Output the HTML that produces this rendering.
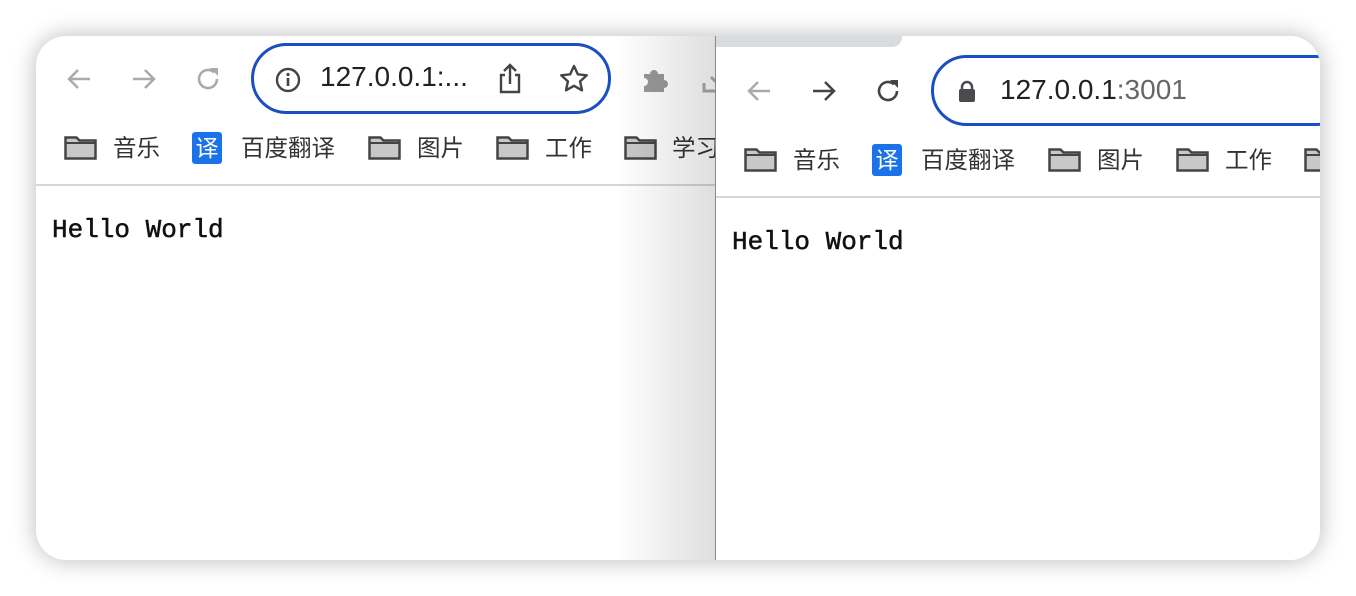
<!DOCTYPE html>
<html><head><meta charset="utf-8"><style>
*{margin:0;padding:0;box-sizing:border-box}
body{width:1356px;height:596px;background:#fff;position:relative;overflow:hidden;font-family:"Liberation Sans","Noto Sans CJK SC",sans-serif}
.frame{position:absolute;left:36px;top:36px;width:1284px;height:524px;border-radius:30px;overflow:hidden;background:#fff;box-shadow:0 0 24px rgba(0,0,0,0.28)}
.a{position:absolute}
.pill{position:absolute;border:3px solid #1a4fc4;border-radius:36px;background:#fff}
.t{position:absolute;font-size:23.5px;color:#333;white-space:nowrap;line-height:30px}
.fd{position:absolute;width:33px;height:24px}
.yi{position:absolute;width:30px;height:32px;background:#1a73e8;color:#fff;border-radius:3px;font-size:23px;line-height:32px;text-align:center}
.hw{position:absolute;font-family:"Liberation Mono",monospace;font-size:26px;color:#111;-webkit-text-stroke:0.5px #111}
.div{position:absolute;height:2px;background:#d6d6d6}
.url{position:absolute;font-size:28px;color:#202124}
</style></head><body>
<svg width="0" height="0" style="position:absolute"><defs><g id="f"><path d="M1.5 1.5h11l3 3h16v18h-30z" fill="#c8c8c8" stroke="#444" stroke-width="2.5"/><path d="M1.5 7h30" stroke="#444" stroke-width="2"/></g></defs></svg>
<div class="frame">
  <!-- left window -->
  <svg class="a" style="left:28px;top:28px" width="30" height="30" viewBox="0 0 30 30"><path d="M26 15H5M14 6l-9 9 9 9" fill="none" stroke="#aaa" stroke-width="2.5"/></svg>
  <svg class="a" style="left:93px;top:28px" width="30" height="30" viewBox="0 0 30 30"><path d="M4 15h21M16 6l9 9-9 9" fill="none" stroke="#aaa" stroke-width="2.5"/></svg>
  <svg class="a" style="left:157px;top:28px" width="30" height="30" viewBox="0 0 30 30"><path d="M24 15a9 9 0 1 1-3-6.7" fill="none" stroke="#aaa" stroke-width="2.6"/><path d="M17 4h8v8z" fill="#aaa"/></svg>
  <div class="pill" style="left:215px;top:7px;width:360px;height:71px"></div>
  <svg class="a" style="left:238px;top:30px" width="28" height="28" viewBox="0 0 28 28"><circle cx="14" cy="14" r="11" fill="none" stroke="#444" stroke-width="2.4"/><rect x="12.7" y="12" width="2.6" height="8" fill="#444"/><circle cx="14" cy="8.5" r="1.6" fill="#444"/></svg>
  <div class="url" style="left:284px;top:25px">127.0.0.1:...</div>
  <svg class="a" style="left:460px;top:26px" width="28" height="34" viewBox="0 0 28 34"><path d="M9 13H5v17h18V13h-4M14 22V3M8 9l6-6 6 6" fill="none" stroke="#444" stroke-width="2.4"/></svg>
  <svg class="a" style="left:522px;top:27px" width="32" height="32" viewBox="0 0 32 32"><path d="M16 3l3.8 8.3 9 1-6.7 6.1 1.9 8.9L16 22.8l-8 4.5 1.9-8.9-6.7-6.1 9-1z" fill="none" stroke="#444" stroke-width="2.4" stroke-linejoin="round"/></svg>
  <svg class="a" style="left:604px;top:28px" width="30" height="30" viewBox="0 0 30 30"><path d="M4 10h6a4 4 0 0 1 8 0h6v6a4 4 0 0 1 0 8v4H4v-6a4 4 0 0 0 0-8z" fill="#999"/></svg>
  <svg class="a" style="left:665px;top:35px" width="20" height="24" viewBox="0 0 20 24"><path d="M3 12v8h17M10 6l6 6" fill="none" stroke="#aaa" stroke-width="3"/></svg>
  <svg class="fd" style="left:28px;top:100px" viewBox="0 0 33 24"><use href="#f"/></svg><div class="t" style="left:77px;top:97px">音乐</div>
  <div class="yi" style="left:156px;top:96px">译</div><div class="t" style="left:205px;top:97px">百度翻译</div>
  <svg class="fd" style="left:332px;top:100px" viewBox="0 0 33 24"><use href="#f"/></svg><div class="t" style="left:381px;top:97px">图片</div>
  <svg class="fd" style="left:460px;top:100px" viewBox="0 0 33 24"><use href="#f"/></svg><div class="t" style="left:509px;top:97px">工作</div>
  <svg class="fd" style="left:588px;top:100px" viewBox="0 0 33 24"><use href="#f"/></svg><div class="t" style="left:636px;top:97px">学习</div>
  <div class="div" style="left:0;top:148px;width:680px"></div>
  <div class="hw" style="left:16px;top:179px">Hello World</div>
  <div class="a" style="left:580px;top:0;width:100px;height:524px;background:linear-gradient(to right,rgba(0,0,0,0),rgba(0,0,0,0.13))"></div>
  <div class="a" style="left:679px;top:0;width:1px;height:524px;background:#8a8a8a"></div>
  <!-- right window -->
  <div class="a" style="left:680px;top:0;width:604px;height:524px;background:#fff"></div>
  <div class="a" style="left:680px;top:0;width:186px;height:11px;background:#d8dbe0;border-bottom-right-radius:10px"></div>
  <svg class="a" style="left:708px;top:40px" width="30" height="30" viewBox="0 0 30 30"><path d="M26 15H5M14 6l-9 9 9 9" fill="none" stroke="#aaa" stroke-width="2.5"/></svg>
  <svg class="a" style="left:773px;top:40px" width="30" height="30" viewBox="0 0 30 30"><path d="M4 15h21M16 6l9 9-9 9" fill="none" stroke="#444" stroke-width="2.5"/></svg>
  <svg class="a" style="left:837px;top:40px" width="30" height="30" viewBox="0 0 30 30"><path d="M24 15a9 9 0 1 1-3-6.7" fill="none" stroke="#444" stroke-width="2.6"/><path d="M17 4h8v8z" fill="#444"/></svg>
  <div class="pill" style="left:895px;top:19px;width:420px;height:71px"></div>
  <svg class="a" style="left:921px;top:43px" width="20" height="24" viewBox="0 0 20 24"><path d="M5 11V8a5 5 0 0 1 10 0v3" fill="none" stroke="#4a4a4f" stroke-width="2.5"/><rect x="2" y="10" width="16" height="13" rx="2" fill="#4a4a4f"/></svg>
  <div class="url" style="left:964px;top:38px">127.0.0.1<span style="color:#666">:3001</span></div>
  <svg class="fd" style="left:708px;top:112px" viewBox="0 0 33 24"><use href="#f"/></svg><div class="t" style="left:757px;top:109px">音乐</div>
  <div class="yi" style="left:836px;top:108px">译</div><div class="t" style="left:885px;top:109px">百度翻译</div>
  <svg class="fd" style="left:1012px;top:112px" viewBox="0 0 33 24"><use href="#f"/></svg><div class="t" style="left:1061px;top:109px">图片</div>
  <svg class="fd" style="left:1140px;top:112px" viewBox="0 0 33 24"><use href="#f"/></svg><div class="t" style="left:1189px;top:109px">工作</div>
  <svg class="fd" style="left:1268px;top:112px" viewBox="0 0 33 24"><use href="#f"/></svg>
  <div class="div" style="left:680px;top:160px;width:604px"></div>
  <div class="hw" style="left:696px;top:191px">Hello World</div>
</div>
</body></html>
